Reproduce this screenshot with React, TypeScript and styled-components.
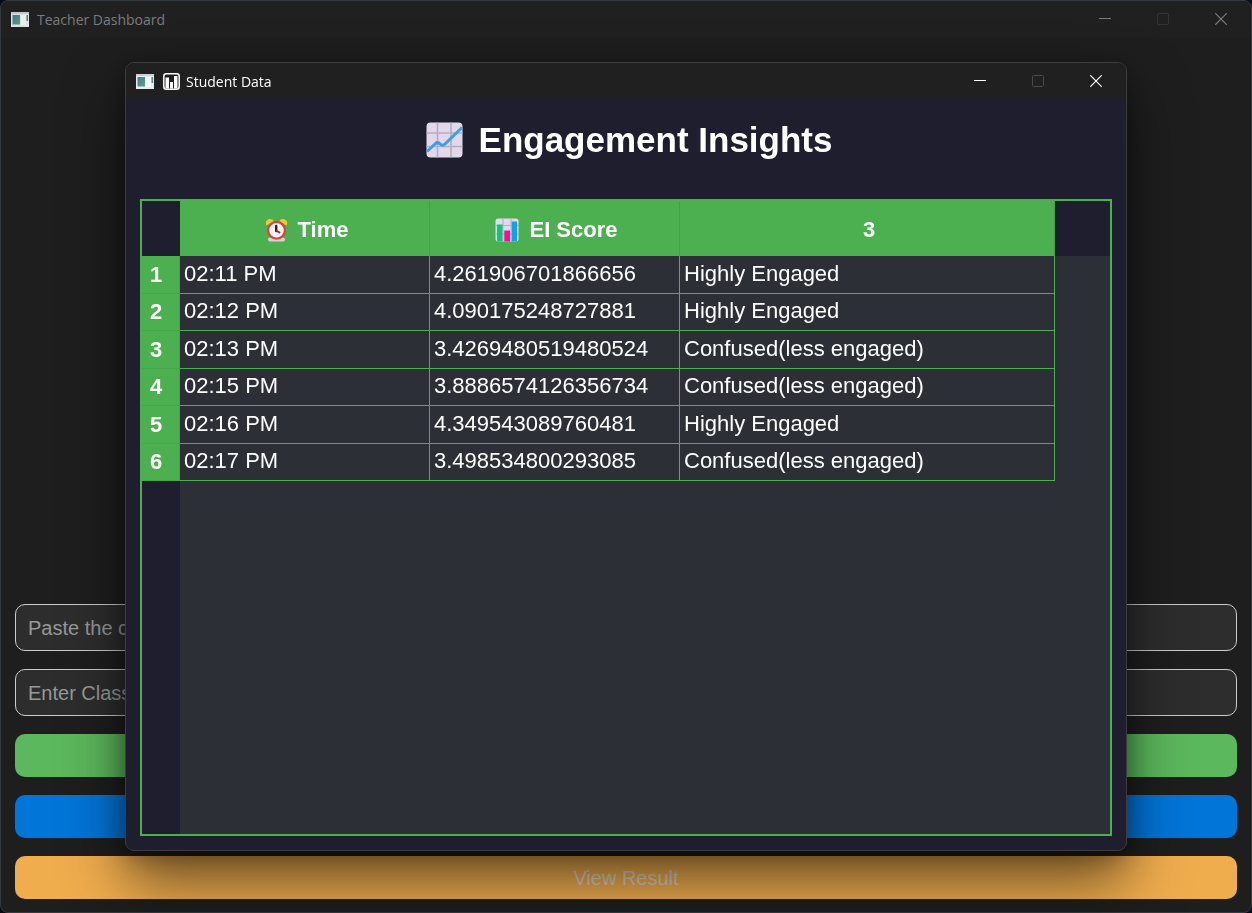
import React from 'react';
import styled, { createGlobalStyle } from 'styled-components';

const GlobalStyle = createGlobalStyle`
  *, *::before, *::after { box-sizing: border-box; }
  body { margin: 0; background: #050a14; font-family: "Liberation Sans", Arial, sans-serif; }
  button, input { font-family: inherit; }
`;

const DashboardWindow = styled.main`
  display: flex;
  flex-direction: column;
  min-height: 100vh;
  background: #1e1e1e;
  border: 1px solid #343a3e;
  border-radius: 8px;
  overflow: hidden;
`;

const TitleBar = styled.header<{ $active?: boolean }>`
  display: flex;
  align-items: center;
  flex: none;
  height: 36px;
  padding: 0 1px 0 9px;
  background: #202020;
  color: ${(p) => (p.$active ? '#ffffff' : '#7c7c7c')};
`;

const TitleText = styled.span`
  flex: 1;
  margin-left: 8px;
  padding-top: 2px;
  font: 400 14px/20px "Open Sans", "Noto Sans", sans-serif;
`;

const TitleChart = styled.svg`
  flex: none;
  margin: 0 -2px 0 9px;
`;

const WindowButton = styled.button`
  display: flex;
  align-items: center;
  justify-content: center;
  width: 58px;
  height: 36px;
  padding: 0;
  border: 0;
  background: transparent;
  color: inherit;
  &:disabled { color: #4a4a4a; }
`;

const DimWindowButton = styled(WindowButton)`
  &:disabled { color: #343434; }
`;

const Form = styled.form`
  display: flex;
  flex: 1;
  flex-direction: column;
  justify-content: flex-end;
  gap: 18px;
  padding: 14px 14px 13px;
`;

const Field = styled.input`
  width: 100%;
  height: 47px;
  padding: 2px 12px 0;
  border: 1px solid #cccccc;
  border-radius: 10px;
  background: #2d2d2d;
  color: #ffffff;
  font-size: 20px;
  &::placeholder { color: #989898; opacity: 1; }
`;

const ActionButton = styled.button<{ $color: string }>`
  width: 100%;
  height: 43px;
  padding: 2px 0 0;
  border: 0;
  border-radius: 10px;
  background: ${(p) => p.$color};
  color: #dcd2c6;
  font-size: 20px;
`;

const Dialog = styled.section`
  position: fixed;
  inset: 62px 125px;
  display: flex;
  flex-direction: column;
  border: 1px solid #3d3d3f;
  border-radius: 9px;
  background: #1e1e2e;
  box-shadow: 0 32px 60px rgba(0, 0, 0, 0.55), 0 4px 24px rgba(0, 0, 0, 0.3);
  overflow: hidden;
`;

const DialogBody = styled.div`
  display: flex;
  flex: 1;
  flex-direction: column;
  min-height: 0;
  padding: 14px;
`;

const Heading = styled.h1`
  display: flex;
  align-items: center;
  justify-content: center;
  gap: 16px;
  flex: none;
  height: 54px;
  margin: 0 0 32px;
  padding-left: 6px;
  color: #ffffff;
  font-size: 35px;
  line-height: 40px;
`;

const TableFrame = styled.div`
  flex: 1;
  min-height: 0;
  border: 2px solid #4caf50;
  background: linear-gradient(#2c2f36, #2c2f36) 38px 55px no-repeat, #1e1e2e;
  overflow: auto;
`;

const DataTable = styled.table`
  width: 913px;
  table-layout: fixed;
  border-collapse: separate;
  border-spacing: 0;
  color: #ffffff;
`;

const Column = styled.col<{ $width: number }>`
  width: ${(p) => p.$width}px;
`;

const ColumnHeader = styled.th`
  height: 55px;
  padding: 2px 0 0 4px;
  border-right: 1px solid #449f48;
  background: #4caf50;
  font-size: 22px;
  line-height: 26px;
`;

const Corner = styled.td`
  padding: 0;
`;

const HeaderContent = styled.span`
  display: flex;
  align-items: center;
  justify-content: center;
  gap: 10px;
`;

const Row = styled.tr`
  height: 38px;
  &:nth-child(even) { height: 37px; }
`;

const RowHeader = styled.th`
  padding: 0 0 0 8px;
  border: solid #47a54b;
  border-width: 0 1px 1px 0;
  background: #4caf50;
  font-size: 22px;
  line-height: 26px;
  text-align: left;
`;

const Cell = styled.td`
  padding: 0 4px 2px;
  border: solid #4caf50;
  border-width: 0 1px 1px 0;
  background: #2c2f36;
  font-size: 22px;
  line-height: 26px;
  white-space: nowrap;
`;

function AppIcon({ dim }: { dim?: boolean }) {
  return (
    <svg width="19" height="15" viewBox="0 0 19 15" opacity={dim ? 0.95 : 1} aria-hidden="true">
      <defs>
        <linearGradient id="screen" x1="0" y1="0" x2="1" y2="1">
          <stop offset="0" stopColor="#437d92" />
          <stop offset="1" stopColor="#59a57c" />
        </linearGradient>
      </defs>
      <rect x="1" width="18" height="15" fill="#e9edef" />
      <rect x="1" width="18" height="2" fill="#cbd2d5" />
      <rect x="2.5" y="3" width="7.5" height="9.5" fill="url(#screen)" />
      <rect x="11" y="3" width="5" height="10" fill="#f7f9fa" />
      <rect x="16.5" y="3" width="1.5" height="6" fill="#4a8b7a" />
    </svg>
  );
}

function WindowControls({ dim }: { dim?: boolean }) {
  const Control = dim ? DimWindowButton : WindowButton;
  return (
    <>
      <Control type="button" aria-label="Minimize">
        <svg width="12" height="12" viewBox="0 0 12 12"><path d="M0 5.5H12" stroke="currentColor" /></svg>
      </Control>
      <Control type="button" aria-label="Maximize" disabled>
        <svg width="12" height="12" viewBox="0 0 12 12"><rect x=".5" y=".5" width="11" height="11" rx="1" fill="none" stroke="currentColor" /></svg>
      </Control>
      <Control type="button" aria-label="Close">
        <svg width="12" height="12" viewBox="0 0 12 12"><path d="M.3 .3L11.7 11.7M11.7 .3L.3 11.7" stroke="currentColor" strokeWidth="1.2" /></svg>
      </Control>
    </>
  );
}

function TrendIcon() {
  return (
    <svg width="37" height="36" viewBox="0 0 37 36" aria-hidden="true">
      <rect x=".5" y=".5" width="36" height="35" rx="4" fill="#e1d8ec" />
      <path d="M11.5 .5V35.5M25 .5V35.5M.5 11H36.5M.5 24.5H36.5" stroke="#b7adc3" strokeWidth="1.6" />
      <path d="M1 29.5L9.5 21.5Q11.5 19.8 13.5 21.5L15 22.6Q17 24 19 22L36 5.5" fill="none" stroke="#3c9fe4" strokeWidth="3" />
    </svg>
  );
}

function ClockIcon() {
  return (
    <svg width="23" height="24" viewBox="0 0 23 24" aria-hidden="true">
      <rect x="3" y="19.5" width="17" height="4" rx="2" fill="#d5d2d8" />
      <path d="M1.5 7.5C-.5 4 2 1 5 1Q8 1 8.8 3.2ZM21.5 7.5C23.5 4 21 1 18 1Q15 1 14.2 3.2Z" fill="#f2c43c" />
      <circle cx="11.5" cy="12.3" r="8.4" fill="#f7f3f6" stroke="#df4038" strokeWidth="2.2" />
      <path d="M11.2 8V13" stroke="#261f2b" strokeWidth="2.4" strokeLinecap="round" />
      <path d="M11.5 12.8L14.6 14.6" stroke="#8d2c34" strokeWidth="1.7" strokeLinecap="round" />
    </svg>
  );
}

function BarsIcon() {
  return (
    <svg width="24" height="24" viewBox="0 0 24 24" aria-hidden="true">
      <rect x=".5" y=".5" width="23" height="23" rx="2.5" fill="#e2d9ec" />
      <path d="M8 .5V23.5M16 .5V23.5M.5 7.5H23.5M.5 16H23.5" stroke="#b6abc2" />
      <path d="M2 6.5H7.5V23.5H3Q2 23.5 2 22Z" fill="#06c878" />
      <path d="M9.3 12.5H15V23.5H9.3Z" fill="#f4108c" />
      <path d="M16.7 3.5H22V22Q22 23.5 21 23.5H16.7Z" fill="#11a0ed" />
    </svg>
  );
}

const records = [
  ['02:11 PM', '4.261906701866656', 'Highly Engaged'],
  ['02:12 PM', '4.090175248727881', 'Highly Engaged'],
  ['02:13 PM', '3.4269480519480524', 'Confused(less engaged)'],
  ['02:15 PM', '3.8886574126356734', 'Confused(less engaged)'],
  ['02:16 PM', '4.349543089760481', 'Highly Engaged'],
  ['02:17 PM', '3.498534800293085', 'Confused(less engaged)'],
];

export default function App() {
  return (
    <>
      <GlobalStyle />
      <DashboardWindow>
        <TitleBar>
          <AppIcon dim />
          <TitleText>Teacher Dashboard</TitleText>
          <WindowControls dim />
        </TitleBar>
        <Form>
          <Field aria-label="Class link" placeholder="Paste the c" />
          <Field aria-label="Class name" placeholder="Enter Class" />
          <ActionButton type="button" $color="#5cb85c" aria-label="Start" />
          <ActionButton type="button" $color="#0275d8" aria-label="Analyze" />
          <ActionButton type="button" $color="#f0ad4e">View Result</ActionButton>
        </Form>
      </DashboardWindow>

      <Dialog role="dialog" aria-label="Student Data">
        <TitleBar $active>
          <AppIcon />
          <TitleChart width="17" height="17" viewBox="0 0 17 17" aria-hidden="true">
            <rect x=".8" y=".8" width="15.4" height="15.4" rx="2.5" fill="none" stroke="#fff" strokeWidth="1.5" />
            <path d="M2.5 4.5H6V15.5H2.5ZM7 9H10V15.5H7ZM11 3H14.5V15.5H11Z" fill="#fff" />
          </TitleChart>
          <TitleText>Student Data</TitleText>
          <WindowControls />
        </TitleBar>
        <DialogBody>
          <Heading><TrendIcon />Engagement Insights</Heading>
          <TableFrame>
            <DataTable>
              <colgroup>
                <Column $width={38} />
                <Column $width={250} />
                <Column $width={250} />
                <Column $width={375} />
              </colgroup>
              <thead>
                <tr>
                  <Corner />
                  <ColumnHeader scope="col"><HeaderContent><ClockIcon />Time</HeaderContent></ColumnHeader>
                  <ColumnHeader scope="col"><HeaderContent><BarsIcon />EI Score</HeaderContent></ColumnHeader>
                  <ColumnHeader scope="col"><HeaderContent>3</HeaderContent></ColumnHeader>
                </tr>
              </thead>
              <tbody>
                {records.map((record, index) => (
                  <Row key={record[0]}>
                    <RowHeader scope="row">{index + 1}</RowHeader>
                    {record.map((value) => <Cell key={value}>{value}</Cell>)}
                  </Row>
                ))}
              </tbody>
            </DataTable>
          </TableFrame>
        </DialogBody>
      </Dialog>
    </>
  );
}
